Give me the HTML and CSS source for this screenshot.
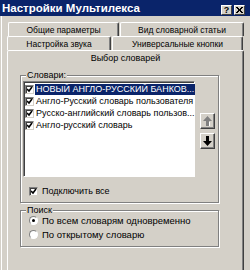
FILE: index.html
```html
<!DOCTYPE html>
<html lang="ru">
<head>
    <meta charset="UTF-8">
    <title>Настройки Мультилекса</title>
    <link rel="stylesheet" href="styles.css">
</head>
<body>
    <div class="titlebar">
        <span class="title">Настройки Мультилекса</span>
        <div class="title-buttons">
            <span class="cap-btn">?</span>
            <span class="cap-btn close">
                <svg width="7" height="6" viewBox="0 0 7 6"><path d="M0 0 L6 6 M1 0 L7 6 M6 0 L0 6 M7 0 L1 6" stroke="#000" stroke-width="1"/></svg>
            </span>
        </div>
    </div>
    <div class="client">
        <div class="tab-row row1">
            <div class="tab t11">Общие параметры</div>
            <div class="tab t12">Вид словарной статьи</div>
        </div>
        <div class="tab-row row2">
            <div class="tab t21">Настройка звука</div>
            <div class="tab t22">Универсальные кнопки</div>
        </div>
        <div class="panel">
            <div class="panel-caption">Выбор словарей</div>

            <fieldset class="group dicts">
                <legend>Словари:</legend>
                <div class="dict-body">
                    <div class="listbox">
                        <div class="item selected"><span class="check on"></span><span class="label">НОВЫЙ АНГЛО-РУССКИЙ БАНКОВ...</span></div>
                        <div class="item"><span class="check on"></span><span class="label">Англо-Русский словарь пользователя</span></div>
                        <div class="item"><span class="check on"></span><span class="label">Русско-английский словарь пользов...</span></div>
                        <div class="item"><span class="check on"></span><span class="label">Англо-русский словарь</span></div>
                    </div>
                    <div class="move-buttons">
                        <span class="move-btn up">
                            <svg width="9" height="10" viewBox="0 0 9 10"><path d="M4.5 0 L9 5 L6 5 L6 10 L3 10 L3 5 L0 5 Z" fill="#808080"/><path d="M6.5 6 L6.5 10.5 L3 10.5" stroke="#fff" fill="none"/></svg>
                        </span>
                        <span class="move-btn down">
                            <svg width="9" height="10" viewBox="0 0 9 10"><path d="M3 0 L6 0 L6 5 L9 5 L4.5 10 L0 5 L3 5 Z" fill="#000"/></svg>
                        </span>
                    </div>
                </div>
                <div class="option">
                    <span class="check on"></span>
                    <span>Подключить все</span>
                </div>
            </fieldset>

            <fieldset class="group search">
                <legend>Поиск</legend>
                <div class="option radio-row">
                    <span class="radio on"></span>
                    <span>По всем словарям одновременно</span>
                </div>
                <div class="option radio-row">
                    <span class="radio"></span>
                    <span>По открытому словарю</span>
                </div>
            </fieldset>
        </div>
    </div>
</body>
</html>
```

FILE: styles.css
```css
body {
    margin: 0;
    width: 250px;
    height: 270px;
    overflow: hidden;
    background-color: #d4d0c8;
    font-family: "Liberation Sans", Arial, sans-serif;
    font-size: 9px;
    color: #000;
}

/* title bar */

.titlebar {
    display: flex;
    align-items: center;
    justify-content: space-between;
    height: 16px;
    padding: 0 5px 0 2px;
    background-color: #0a246a;
}

.title {
    color: #fff;
    font-weight: bold;
    font-size: 11.5px;
}

.title-buttons {
    display: flex;
    gap: 2px;
    margin-top: 3px;
}

.cap-btn {
    display: flex;
    align-items: center;
    justify-content: center;
    width: 9px;
    height: 8px;
    background-color: #d4d0c8;
    border: 1px solid;
    border-color: #fff #404040 #404040 #fff;
    font-size: 9px;
    font-weight: bold;
    line-height: 8px;
}

/* tabs */

.client {
    margin-left: 1px;
    border-left: 1px solid #fff;
    height: 254px;
    padding-top: 6px;
}

.tab-row {
    display: flex;
    gap: 1px;
    height: 14px;
}

.row1 {
    margin-left: 6px;
}

.row2 {
    margin-left: 5px;
}

.tab {
    display: flex;
    align-items: center;
    justify-content: center;
    box-sizing: border-box;
    height: 14px;
    font-size: 8.5px;
    border: 1px solid #fff;
    border-right-color: #404040;
    border-bottom: none;
    border-radius: 2px 2px 0 0;
    box-shadow: inset -1px 0 0 #808080;
}

.t11 { width: 111px; }
.t12 { width: 124px; }
.t21 { width: 104px; }
.t22 { width: 131px; }

.panel {
    margin-left: 5px;
    width: 237px;
    height: 220px;
    box-sizing: border-box;
    border: 1px solid #fff;
    border-right-color: #404040;
    border-bottom: none;
    border-radius: 2px 2px 0 0;
    box-shadow: inset -1px 0 0 #808080;
}

.panel-caption {
    height: 14px;
    line-height: 14px;
    text-align: center;
}

/* group boxes */

.group {
    margin: 5px 0 0 12px;
    width: 199px;
    box-sizing: border-box;
    padding: 0 0 0 2px;
    border: 1px solid #808080;
    box-shadow: inset 1px 1px 0 #fff, 1px 1px 0 #fff;
}

.group legend {
    margin-left: 3px;
    padding: 0 1px;
    line-height: 10px;
    background-color: #d4d0c8;
}

.dict-body {
    display: flex;
    margin-top: 1px;
}

.listbox {
    width: 172px;
    height: 96px;
    box-sizing: border-box;
    padding: 1px 0 0 1px;
    background-color: #fff;
    border: 1px solid;
    border-color: #808080 #fff #fff #808080;
    box-shadow: inset 1px 1px 0 #404040;
}

.item {
    display: flex;
    align-items: center;
    height: 12px;
    white-space: nowrap;
}

.item .label {
    margin-left: 1px;
    padding: 0 1px;
    line-height: 11px;
}

.item.selected .label {
    background-color: #0a246a;
    color: #fff;
    flex: 1;
}

.check {
    display: inline-block;
    flex: none;
    width: 9px;
    height: 9px;
    box-sizing: border-box;
    background-color: #fff;
    border: 1px solid;
    border-color: #808080 #d4d0c8 #d4d0c8 #808080;
    box-shadow: inset 1px 1px 0 #404040;
}

.check.on {
    background: #fff url("data:image/svg+xml,%3Csvg xmlns='http://www.w3.org/2000/svg' width='7' height='7'%3E%3Cpath d='M1 3 L3 5 L6 1' stroke='%23000' stroke-width='1.6' fill='none'/%3E%3C/svg%3E") no-repeat 0 0;
}

.move-buttons {
    display: flex;
    flex-direction: column;
    gap: 4px;
    margin: 32px 0 0 5px;
}

.move-btn {
    display: flex;
    align-items: center;
    justify-content: center;
    width: 15px;
    height: 16px;
    box-sizing: border-box;
    border: 1px solid;
    border-color: #fff #404040 #404040 #fff;
    box-shadow: inset -1px -1px 0 #808080;
}

.option {
    display: flex;
    align-items: center;
    gap: 4px;
    height: 12px;
    margin: 8px 0 5px 6px;
}

/* search group */

.search {
    margin-top: 2px;
    height: 42px;
}

.search .radio-row {
    margin: 0 0 2px 6px;
    font-size: 9.5px;
}

.search .radio-row:first-of-type {
    margin-top: -1px;
}

.radio {
    display: inline-block;
    position: relative;
    width: 9px;
    height: 9px;
    box-sizing: border-box;
    border-radius: 50%;
    background-color: #fff;
    border: 1px solid;
    border-color: #808080 #fff #fff #808080;
}

.radio.on::after {
    content: "";
    position: absolute;
    left: 2px;
    top: 2px;
    width: 3px;
    height: 3px;
    border-radius: 50%;
    background-color: #000;
}
```
